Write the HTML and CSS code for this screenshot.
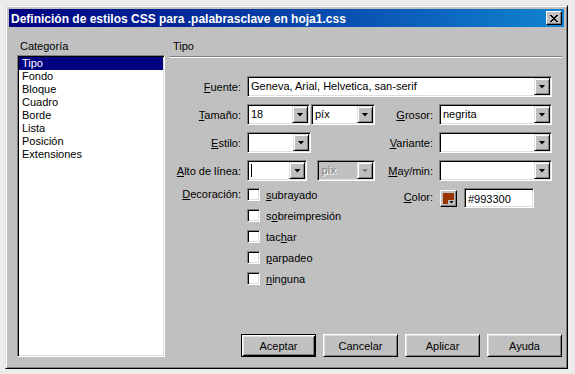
FILE: index.html
```html
<html>
<head>
    <title>Definición de estilos CSS</title>
    <link rel="stylesheet" href="styles.css">
</head>
<body>
<div class="dialog">
    <div class="titlebar">
        <span class="title">Definición de estilos CSS para .palabrasclave en hoja1.css</span>
        <span class="close">
            <svg width="8" height="7" viewBox="0 0 8 7" shape-rendering="crispEdges">
                <path d="M0 0h2v1h-2zM6 0h2v1h-2zM1 1h2v1h-2zM5 1h2v1h-2zM2 2h4v1h-4zM3 3h2v1h-2zM2 4h4v1h-4zM1 5h2v1h-2zM5 5h2v1h-2zM0 6h2v1h-2zM6 6h2v1h-2z" fill="#000"/>
            </svg>
        </span>
    </div>

    <div class="content">
        <div class="cat">
            <div class="hdr">Categoría</div>
            <ul class="list">
                <li class="sel">Tipo</li>
                <li>Fondo</li>
                <li>Bloque</li>
                <li>Cuadro</li>
                <li>Borde</li>
                <li>Lista</li>
                <li>Posición</li>
                <li>Extensiones</li>
            </ul>
        </div>

        <div class="panel">
            <div class="hdr tab-hdr">Tipo</div>
            <div class="sheet">
                <div class="form">
                    <!-- row 1 -->
                    <span class="lbl"><u>F</u>uente:</span>
                    <div class="combo wide"><span class="val">Geneva, Arial, Helvetica, san-serif</span><span class="drop"><i></i></span></div>

                    <!-- row 2 -->
                    <span class="lbl"><u>T</u>amaño:</span>
                    <div class="pair">
                        <div class="combo w63"><span class="val">18</span><span class="drop"><i></i></span></div>
                        <div class="combo w64"><span class="val">píx</span><span class="drop"><i></i></span></div>
                    </div>
                    <span class="lbl"><u>G</u>rosor:</span>
                    <div class="combo"><span class="val">negrita</span><span class="drop"><i></i></span></div>

                    <!-- row 3 -->
                    <span class="lbl"><u>E</u>stilo:</span>
                    <div class="pair">
                        <div class="combo w64"><span class="val"></span><span class="drop"><i></i></span></div>
                    </div>
                    <span class="lbl"><u>V</u>ariante:</span>
                    <div class="combo"><span class="val"></span><span class="drop"><i></i></span></div>

                    <!-- row 4 -->
                    <span class="lbl"><u>A</u>lto de línea:</span>
                    <div class="pair gap10">
                        <div class="combo w64"><span class="val"><b class="caret"></b></span><span class="drop"><i></i></span></div>
                        <div class="combo w61 disabled"><span class="val">píx</span><span class="drop"><i></i></span></div>
                    </div>
                    <span class="lbl"><u>M</u>ay/min:</span>
                    <div class="combo"><span class="val"></span><span class="drop"><i></i></span></div>

                    <!-- row 5 -->
                    <span class="lbl top"><u>D</u>ecoración:</span>
                    <div class="opts">
                        <label class="opt"><span class="chk"></span><span><u>s</u>ubrayado</span></label>
                        <label class="opt"><span class="chk"></span><span>s<u>o</u>breimpresión</span></label>
                        <label class="opt"><span class="chk"></span><span>tac<u>h</u>ar</span></label>
                        <label class="opt"><span class="chk"></span><span><u>p</u>arpadeo</span></label>
                        <label class="opt"><span class="chk"></span><span><u>n</u>inguna</span></label>
                    </div>
                    <span class="lbl top color-lbl"><u>C</u>olor:</span>
                    <div class="colorbox">
                        <span class="swatch"><span class="fill"></span><span class="arr"><i></i></span></span>
                        <span class="field">#993300</span>
                    </div>
                </div>

                <div class="buttons">
                    <span class="btn default">Aceptar</span>
                    <span class="btn">Cancelar</span>
                    <span class="btn">Aplicar</span>
                    <span class="btn">Ayuda</span>
                </div>
            </div>
        </div>
    </div>
</div>
</body>
</html>
```

FILE: styles.css
```css
* {
    box-sizing: border-box;
}
body {
    margin: 0;
    background: #ececec;
    font-family: "Liberation Sans", Arial, sans-serif;
    font-size: 11px;
    color: #000;
}

.dialog {
    margin: 5px 0 0 5px;
    width: 563px;
    height: 364px;
    background: #c0c0c0;
    border: 1px solid;
    border-color: #dfdfdf #000 #000 #dfdfdf;
    box-shadow: inset 1px 1px #fff, inset -1px -1px #808080;
    padding: 3px;
    display: flex;
    flex-direction: column;
}

.titlebar {
    height: 18px;
    background: linear-gradient(to right, #000080, #1084d0);
    color: #fff;
    display: flex;
    align-items: center;
    padding: 0 2px;
}
.title {
    flex: 1;
    font-weight: bold;
    font-size: 12px;
    white-space: nowrap;
    padding-top: 1px;
}
.close {
    width: 16px;
    height: 14px;
    background: #c0c0c0;
    border: 1px solid;
    border-color: #fff #000 #000 #fff;
    box-shadow: inset -1px -1px #808080;
    display: flex;
    align-items: center;
    justify-content: center;
}

.content {
    flex: 1;
    display: grid;
    grid-template-columns: 148px 1fr;
    column-gap: 5px;
    padding: 13px 2px 8px 8px;
}

.hdr {
    height: 15px;
    line-height: 13px;
    padding-left: 3px;
}

.cat {
    display: flex;
    flex-direction: column;
}
.list {
    flex: 1;
    margin: 0;
    padding: 1px;
    list-style: none;
    background: #fff;
    border: 1px solid;
    border-color: #808080 #fff #fff #808080;
    box-shadow: inset 1px 1px #000, inset -1px -1px #dfdfdf;
}
.list li {
    height: 13px;
    line-height: 13px;
    padding-left: 3px;
}
.list li.sel {
    background: #000080;
    color: #fff;
}

.panel {
    display: flex;
    flex-direction: column;
}
.tab-hdr {
    height: 17px;
    border-bottom: 1px solid #808080;
    box-shadow: 0 1px #fff;
}
.sheet {
    flex: 1;
    display: flex;
    flex-direction: column;
    padding-top: 19px;
}

.form {
    display: grid;
    grid-template-columns: 77px 128px 64px 113px;
    grid-template-rows: repeat(4, 21px) auto;
    row-gap: 7px;
    align-items: center;
}
.lbl {
    text-align: right;
    padding-right: 6px;
    white-space: nowrap;
}
.lbl.top {
    align-self: start;
    line-height: 13px;
}
.color-lbl {
    padding-top: 3px;
}

.combo {
    display: flex;
    height: 21px;
    background: #fff;
    border: 1px solid;
    border-color: #808080 #fff #fff #808080;
    box-shadow: inset 1px 1px #000, inset -1px -1px #dfdfdf;
    padding: 1px;
}
.combo.wide {
    grid-column: 2 / 5;
}
.w61 { width: 61px; }
.w63 { width: 63px; }
.w64 { width: 64px; }
.combo .val {
    flex: 1;
    padding-left: 2px;
    line-height: 17px;
    overflow: hidden;
    white-space: nowrap;
}
.drop {
    width: 16px;
    height: 17px;
    background: #c0c0c0;
    border: 1px solid;
    border-color: #dfdfdf #000 #000 #dfdfdf;
    box-shadow: inset 1px 1px #fff, inset -1px -1px #808080;
    display: flex;
    align-items: center;
    justify-content: center;
}
.drop i,
.arr i {
    display: block;
    width: 7px;
    height: 4px;
    background: #000;
    clip-path: polygon(0 0, 100% 0, 50% 100%);
}
.disabled {
    background: #c0c0c0;
}
.disabled .val {
    color: #808080;
    text-shadow: 1px 1px #fff;
}
.disabled .drop i {
    background: #808080;
}
.caret {
    display: block;
    width: 1px;
    height: 13px;
    margin-top: 2px;
    background: #000;
}

.pair {
    display: flex;
    gap: 1px;
}
.pair.gap10 {
    gap: 10px;
}

.opts {
    grid-column: 2 / 3;
    display: flex;
    flex-direction: column;
    gap: 8px;
}
.opt {
    display: flex;
    align-items: center;
    gap: 6px;
    height: 13px;
    white-space: nowrap;
}
.chk {
    width: 13px;
    height: 13px;
    background: #fff;
    border: 1px solid;
    border-color: #808080 #fff #fff #808080;
    box-shadow: inset 1px 1px #000, inset -1px -1px #dfdfdf;
}

.colorbox {
    align-self: start;
    display: flex;
    align-items: center;
    gap: 7px;
    padding-left: 1px;
}
.swatch {
    position: relative;
    width: 17px;
    height: 17px;
    padding: 2px;
    background: #c0c0c0;
    border: 1px solid;
    border-color: #fff #000 #000 #fff;
    box-shadow: inset -1px -1px #808080;
}
.swatch .fill {
    display: block;
    width: 100%;
    height: 100%;
    background: #993300;
}
.swatch .arr {
    position: absolute;
    right: 1px;
    bottom: 1px;
    width: 7px;
    height: 5px;
    background: #c0c0c0;
    display: flex;
    align-items: center;
    justify-content: center;
}
.swatch .arr i {
    width: 5px;
    height: 3px;
}
.field {
    width: 70px;
    height: 20px;
    line-height: 16px;
    padding: 2px 3px;
    background: #fff;
    border: 1px solid;
    border-color: #808080 #fff #fff #808080;
    box-shadow: inset 1px 1px #000, inset -1px -1px #dfdfdf;
}

.buttons {
    margin-top: auto;
    display: flex;
    justify-content: flex-end;
    gap: 7px;
}
.btn {
    width: 75px;
    height: 23px;
    background: #c0c0c0;
    border: 1px solid;
    border-color: #fff #000 #000 #fff;
    box-shadow: inset 1px 1px #dfdfdf, inset -1px -1px #808080;
    display: flex;
    align-items: center;
    justify-content: center;
}
.btn.default {
    border-color: #000;
    box-shadow: inset 1px 1px #fff, inset -1px -1px #000, inset 2px 2px #dfdfdf, inset -2px -2px #808080;
}
```
